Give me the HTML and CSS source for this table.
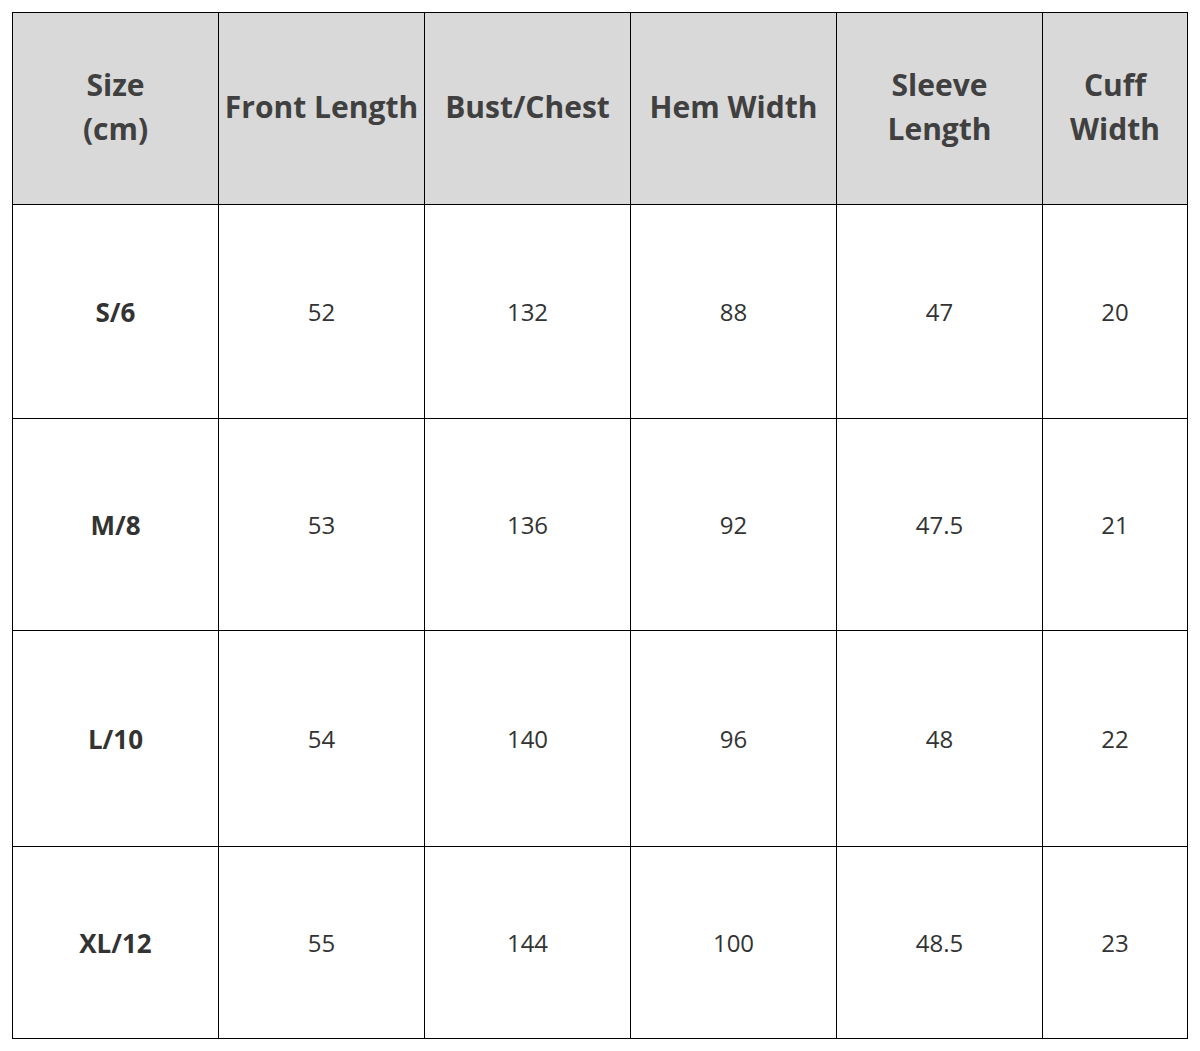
FILE: index.html
```html
<!DOCTYPE html>
<html>
<head>
<meta charset="utf-8">
<link rel="stylesheet" href="styles.css">
</head>
<body>
<table class="size-table">
  <colgroup>
    <col class="c"><col class="c"><col class="c"><col class="c"><col class="c"><col class="c-last">
  </colgroup>
  <thead>
    <tr class="head">
      <th>Size<br>(cm)</th>
      <th>Front Length</th>
      <th>Bust/Chest</th>
      <th>Hem Width</th>
      <th>Sleeve<br>Length</th>
      <th>Cuff<br>Width</th>
    </tr>
  </thead>
  <tbody>
    <tr class="r1"><th>S/6</th><td>52</td><td>132</td><td>88</td><td>47</td><td>20</td></tr>
    <tr class="r2"><th>M/8</th><td>53</td><td>136</td><td>92</td><td>47.5</td><td>21</td></tr>
    <tr class="r3"><th>L/10</th><td>54</td><td>140</td><td>96</td><td>48</td><td>22</td></tr>
    <tr class="r4"><th>XL/12</th><td>55</td><td>144</td><td>100</td><td>48.5</td><td>23</td></tr>
  </tbody>
</table>
</body>
</html>
```
FILE: styles.css
```css
html, body {
  margin: 0;
  background: #fff;
}
body {
  padding: 12px 0 0 12px;
  font-family: "Open Sans", "Noto Sans", sans-serif;
}
.size-table {
  border-collapse: collapse;
  table-layout: fixed;
  width: 1175px;
}
.c { width: 206px; }
.c-last { width: 145px; }
.size-table th,
.size-table td {
  border: 1px solid #000;
  text-align: center;
  vertical-align: middle;
  padding: 0;
}
.head th {
  background: #d9d9d9;
  color: #404040;
  font-weight: 700;
  font-size: 30px;
  line-height: 44px;
  height: 187px;
  padding-bottom: 4px;
}
tbody th {
  color: #333;
  font-weight: 700;
  font-size: 26px;
}
tbody td {
  color: #333;
  font-weight: 400;
  font-size: 24px;
}
.r1 th, .r1 td { height: 213px; }
.r2 th, .r2 td { height: 211px; }
.r3 th, .r3 td { height: 215px; }
.r4 th, .r4 td { height: 191px; }
```
